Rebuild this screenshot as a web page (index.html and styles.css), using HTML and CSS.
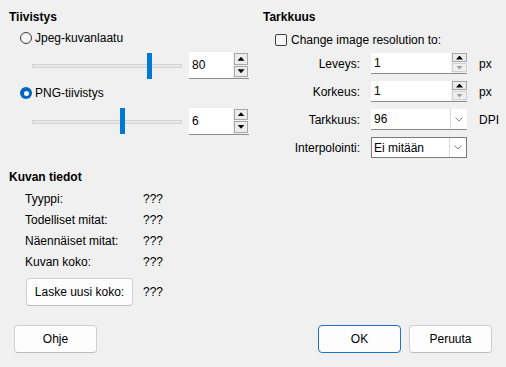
FILE: index.html
```html
<!DOCTYPE html>
<html lang="fi">
<head>
<meta charset="utf-8">
<title>Kuvan asetukset</title>
<link rel="stylesheet" href="styles.css">
</head>
<body>
<div class="dialog">
  <div class="top">
    <section class="left">
      <div class="heading">Tiivistys</div>
      <div class="radio-row"><span class="radio"></span><span>Jpeg-kuvanlaatu</span></div>
      <div class="slider-row">
        <div class="slider"><div class="track"></div><div class="thumb" style="left:115px"></div></div>
        <div class="spin spin-lg">
          <span class="field">80</span>
          <span class="btns"><span class="sbtn"><i class="tri up"></i></span><span class="sbtn"><i class="tri down"></i></span></span>
        </div>
      </div>
      <div class="radio-row"><span class="radio checked"></span><span>PNG-tiivistys</span></div>
      <div class="slider-row second">
        <div class="slider"><div class="track"></div><div class="thumb" style="left:88px"></div></div>
        <div class="spin spin-lg">
          <span class="field">6</span>
          <span class="btns"><span class="sbtn"><i class="tri up"></i></span><span class="sbtn"><i class="tri down"></i></span></span>
        </div>
      </div>

      <div class="heading info-heading">Kuvan tiedot</div>
      <div class="info-rows">
        <div class="info-row"><span class="info-label">Tyyppi:</span><span>???</span></div>
        <div class="info-row"><span class="info-label">Todelliset mitat:</span><span>???</span></div>
        <div class="info-row"><span class="info-label">Näennäiset mitat:</span><span>???</span></div>
        <div class="info-row"><span class="info-label">Kuvan koko:</span><span>???</span></div>
      </div>
      <div class="calc-row"><button class="btn calc">Laske uusi koko:</button><span>???</span></div>
    </section>

    <section class="right">
      <div class="heading">Tarkkuus</div>
      <div class="check-row"><span class="checkbox"></span><span>Change image resolution to:</span></div>
      <div class="res-row">
        <span class="res-label">Leveys:</span>
        <div class="spin spin-sm">
          <span class="field">1</span>
          <span class="btns"><span class="sbtn"><i class="tri up"></i></span><span class="sbtn disabled"><i class="tri down"></i></span></span>
        </div>
        <span class="unit">px</span>
      </div>
      <div class="res-row">
        <span class="res-label">Korkeus:</span>
        <div class="spin spin-sm">
          <span class="field">1</span>
          <span class="btns"><span class="sbtn"><i class="tri up"></i></span><span class="sbtn disabled"><i class="tri down"></i></span></span>
        </div>
        <span class="unit">px</span>
      </div>
      <div class="res-row">
        <span class="res-label">Tarkkuus:</span>
        <div class="combo">
          <span class="val">96</span>
          <span class="arrow"><svg width="8" height="5" viewBox="0 0 8 5"><polyline points="0.5,0.5 4,4 7.5,0.5" fill="none" stroke="#8a8a8a" stroke-width="1"/></svg></span>
        </div>
        <span class="unit">DPI</span>
      </div>
      <div class="res-row">
        <span class="res-label">Interpolointi:</span>
        <div class="combo framed">
          <span class="val">Ei mitään</span>
          <span class="arrow"><svg width="8" height="5" viewBox="0 0 8 5"><polyline points="0.5,0.5 4,4 7.5,0.5" fill="none" stroke="#8a8a8a" stroke-width="1"/></svg></span>
        </div>
      </div>
    </section>
  </div>

  <div class="footer">
    <button class="btn">Ohje</button>
    <span class="spacer"></span>
    <button class="btn default">OK</button>
    <button class="btn">Peruuta</button>
  </div>
</div>
</body>
</html>
```
FILE: styles.css
```css
* { box-sizing: border-box; }

body {
  margin: 0;
  background: #f0f0f0;
  font: 12px "Liberation Sans", Arial, sans-serif;
  color: #000;
}

.dialog {
  width: 506px;
  height: 367px;
  display: flex;
  flex-direction: column;
}

.top { display: flex; }

.left { width: 250px; padding-top: 10px; }
.right { padding-top: 10px; padding-left: 13px; }

.heading {
  font-weight: bold;
  height: 14px;
  line-height: 14px;
}
.left .heading { padding-left: 9px; }

.radio-row {
  height: 28px;
  display: flex;
  align-items: center;
  gap: 3px;
  padding-left: 20px;
}

.radio {
  width: 12px;
  height: 12px;
  border: 1px solid #3c3c3c;
  border-radius: 50%;
  background: #f6f6f6;
}
.radio.checked {
  border: none;
  background: #0067c0;
  display: flex;
  align-items: center;
  justify-content: center;
}
.radio.checked::after {
  content: "";
  width: 5px;
  height: 5px;
  border-radius: 50%;
  background: #fff;
}

.slider-row {
  height: 27px;
  display: flex;
  align-items: center;
  gap: 7px;
  padding-left: 32px;
}
.slider-row.second { height: 28px; }

.slider {
  position: relative;
  width: 150px;
  height: 26px;
  display: flex;
  align-items: center;
}
.track {
  width: 100%;
  height: 4px;
  margin-top: 1px;
  background: #e7e7e7;
  border: 1px solid #d4d4d4;
}
.thumb {
  position: absolute;
  top: 0;
  width: 5px;
  height: 26px;
  background: #0078d4;
}

.spin {
  display: flex;
  border-bottom: 1px solid #8c8c8c;
}
.spin .field {
  background: #fff;
  display: flex;
  align-items: center;
  padding-left: 3px;
}
.spin .btns {
  display: flex;
  flex-direction: column;
  gap: 1px;
}
.sbtn {
  flex: 1;
  border: 1px solid #a7a7a7;
  background: #ececec;
  display: flex;
  align-items: center;
  justify-content: center;
}
.sbtn.disabled { border-color: #d2d2d2; background: #efefef; }
.tri {
  display: block;
  width: 7px;
  height: 4px;
  background: #000;
}
.tri.up { clip-path: polygon(50% 0, 100% 100%, 0 100%); }
.tri.down { clip-path: polygon(0 0, 100% 0, 50% 100%); }
.sbtn.disabled .tri { background: #a0a0a0; }

.spin-lg { width: 60px; height: 27px; }
.spin-lg .field { width: 44px; }
.spin-lg .btns { width: 15px; padding: 1px 0 1px 1px; }

.spin-sm { width: 96px; height: 21px; }
.spin-sm .field { width: 80px; }
.spin-sm .btns { width: 16px; padding: 0 0 1px 1px; }

.check-row {
  height: 29px;
  padding-top: 2px;
  padding-left: 12px;
  display: flex;
  align-items: center;
  gap: 4px;
}
.checkbox {
  width: 12px;
  height: 12px;
  border: 1px solid #3c3c3c;
  border-radius: 2px;
  background: #f6f6f6;
}

.res-row {
  display: flex;
  align-items: center;
  height: 21px;
}
.res-row + .res-row { margin-top: 7px; }
.res-label {
  width: 97px;
  text-align: right;
  margin-right: 11px;
}
.unit { margin-left: 12px; }

.combo {
  width: 96px;
  height: 21px;
  display: flex;
  background: #fff;
  border-bottom: 1px solid #8c8c8c;
}
.combo.framed { border: 1px solid #7a7a7a; }
.combo .val {
  flex: 1;
  display: flex;
  align-items: center;
  padding-left: 3px;
}
.combo.framed .val { padding-left: 2px; }
.combo .arrow {
  width: 17px;
  border-left: 1px solid #dadada;
  display: flex;
  align-items: center;
  justify-content: center;
}

.info-heading { margin-top: 35px; }
.info-rows { margin-top: 4px; padding-left: 25px; }
.info-row {
  display: flex;
  align-items: center;
  height: 21px;
}
.info-label { width: 118px; }

.calc-row {
  margin-top: 6px;
  padding-left: 26px;
  display: flex;
  align-items: center;
  gap: 10px;
}

.btn {
  height: 28px;
  padding: 0;
  font: inherit;
  color: #000;
  background: #fdfdfd;
  border: 1px solid #d0d0d0;
  border-bottom-color: #bdbdbd;
  border-radius: 4px;
  display: flex;
  align-items: center;
  justify-content: center;
}
.calc { width: 107px; }

.footer {
  margin-top: auto;
  display: flex;
  gap: 8px;
  padding: 0 14px 14px;
}
.footer .btn { width: 83px; }
.footer .spacer { flex: 1; }
.btn.default { border-color: #1a73c9; }
```
